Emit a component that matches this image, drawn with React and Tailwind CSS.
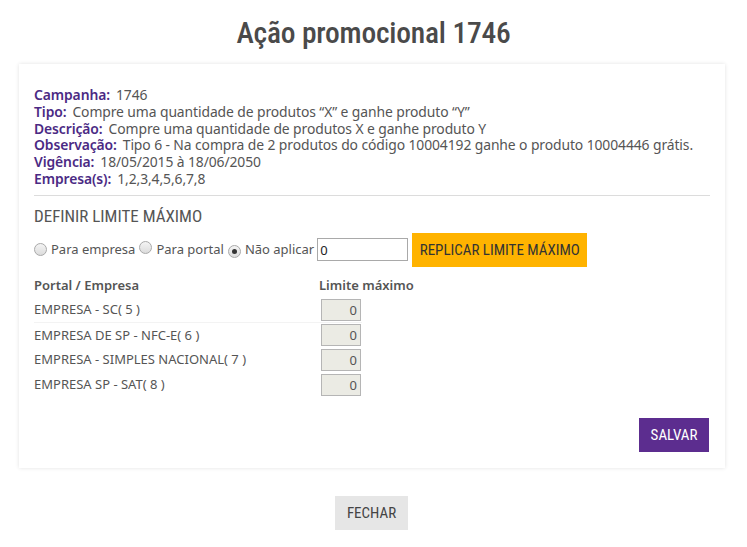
import React from "react";

const info = [
  ["Campanha:", "1746"],
  ["Tipo:", "Compre uma quantidade de produtos \u201cX\u201d e ganhe produto \u201cY\u201d"],
  ["Descrição:", "Compre uma quantidade de produtos X e ganhe produto Y"],
  ["Observação:", "Tipo 6 - Na compra de 2 produtos do código 10004192 ganhe o produto 10004446 grátis."],
  ["Vigência:", "18/05/2015 à 18/06/2050"],
  ["Empresa(s):", "1,2,3,4,5,6,7,8"],
];

const rows = [
  "EMPRESA - SC( 5 )",
  "EMPRESA DE SP - NFC-E( 6 )",
  "EMPRESA - SIMPLES NACIONAL( 7 )",
  "EMPRESA SP - SAT( 8 )",
];

function Radio({ checked }) {
  return (
    <span className="inline-flex h-[13px] w-[13px] items-center justify-center rounded-full border border-[#a9a9a9] bg-gradient-to-b from-[#f4f4f4] to-[#dcdcdc]">
      {checked && <span className="h-[5px] w-[5px] rounded-full bg-[#333]" />}
    </span>
  );
}

const cond = { fontFamily: "'Roboto Condensed', Roboto, 'Noto Sans', sans-serif" };

export default function App() {
  return (
    <div className="min-h-[547px] w-[747px] bg-white text-[#555]" style={{ fontFamily: "'Noto Sans', 'Open Sans', sans-serif" }}>
      <h1 className="pt-[14px] text-center text-[29.5px] leading-[38px] font-medium tracking-[-0.2px] text-[#4a4a4a]" style={cond}>
        Ação promocional 1746
      </h1>
      <div className="mx-[19px] mt-[12px] w-[706px] bg-white px-[15px] pt-[23px] pb-[16px] shadow-[0_0_4px_rgba(0,0,0,0.12)]">
        <div className="text-[13.9px] leading-[16.8px] tracking-[-0.1px]">
          {info.map(([l, v]) => (
            <div key={l} className="flex h-[16.8px] items-center whitespace-nowrap">
              <span className="font-semibold text-[#4b2a84]">{l}</span>
              <span className="ml-[6px] text-[#555]">{v}</span>
            </div>
          ))}
        </div>
        <div className="mt-[7px] border-t border-[#dcdcdc]" />
        <div className="mt-[9px] text-[17px] leading-[22px] text-[#555]" style={cond}>
          DEFINIR LIMITE MÁXIMO
        </div>
        <div className="mt-[6px] flex h-[34px] items-center text-[13px] text-[#555]">
          <Radio />
          <span className="ml-[4px]">Para empresa</span>
          <span className="ml-[4px]"><Radio /></span>
          <span className="ml-[4px]">Para portal</span>
          <span className="ml-[4px]"><Radio checked /></span>
          <span className="ml-[4px]">Não aplicar</span>
          <input
            readOnly
            value="0"
            className="ml-[3px] h-[23px] w-[91px] border border-[#a9a9a9] px-[2px] text-[13px] text-[#222] outline-none"
          />
          <button className="ml-[4px] h-[34px] w-[175px] bg-[#ffb300] text-[15px] font-normal text-[#333]" style={cond}>
            REPLICAR LIMITE MÁXIMO
          </button>
        </div>
        <div className="mt-[9px] flex text-[13px] font-semibold text-[#555]">
          <div className="w-[285px]">Portal / Empresa</div>
          <div>Limite máximo</div>
        </div>
        <div className="mt-[3px] text-[13px] text-[#555]">
          {rows.map((r, i) => (
            <div key={r} className={`flex h-[24.7px] w-[328px] items-center ${i === 0 ? "border-b border-[#f3f3f3]" : ""}`}>
              <div className="w-[287px]">{r}</div>
              <input
                readOnly
                value="0"
                className="h-[22px] w-[40px] border border-[#b5b5b5] bg-[#ebebe4] px-[3px] text-right text-[13px] text-[#555] outline-none"
              />
            </div>
          ))}
        </div>
        <div className="mt-[21px] flex justify-end pr-[1px]">
          <button className="h-[34px] w-[70px] bg-[#5c2d8f] text-[15px] text-white" style={cond}>
            SALVAR
          </button>
        </div>
      </div>
      <div className="mt-[28px] flex justify-center pr-[4px]">
        <button className="h-[34px] w-[73px] bg-[#e6e6e6] text-[15px] text-[#444]" style={cond}>
          FECHAR
        </button>
      </div>
    </div>
  );
}
